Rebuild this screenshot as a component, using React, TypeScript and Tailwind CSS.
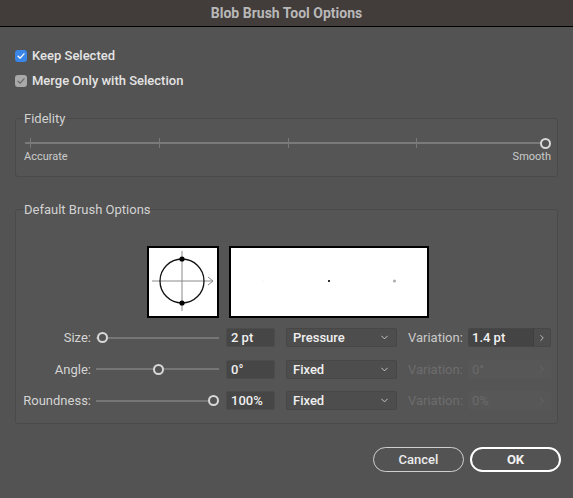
import React from "react";
import { ChevronDown, ChevronRight } from "lucide-react";

const font = { fontFamily: "Roboto, 'Noto Sans', sans-serif" };

const Check = ({ color }: { color: string }) => (
  <svg viewBox="0 0 12 12" className="w-[10px] h-[10px]">
    <path d="M2.5 6.2 L5 8.6 L9.6 3.4" fill="none" stroke={color} strokeWidth="1.6" strokeLinecap="round" strokeLinejoin="round" />
  </svg>
);

const CheckRow = ({ label, active }: { label: string; active?: boolean }) => (
  <div className="h-[25px] flex items-center gap-[5px]">
    <div
      className={
        active
          ? "w-[12px] h-[12px] rounded-[3px] bg-[#3a86e8] flex items-center justify-center"
          : "w-[12px] h-[12px] rounded-[3px] bg-[#a9a9a9] flex items-center justify-center"
      }
    >
      <Check color={active ? "#ffffff" : "#6a6a6a"} />
    </div>
    <span className="text-[13px] text-[#e4e4e4] font-medium">{label}</span>
  </div>
);

const Group = ({ title, children, className }: { title: string; children: React.ReactNode; className?: string }) => (
  <div className={"border border-[#4a4a4a] rounded-[3px] bg-[#555555] " + (className ?? "")}>
    <div className="-mt-[7px] pl-[8px] h-[14px] leading-[14px] text-[13px] text-[#d2d2d2]">{title}</div>
    {children}
  </div>
);

const Knob = () => (
  <div className="w-[11px] h-[11px] rounded-full border-2 border-[#d8d8d8] bg-[#535353] shrink-0" />
);

const FidelitySlider = () => (
  <div className="relative w-[526px] h-[12px] ml-[9px]">
    <div className="absolute left-0 right-[10px] top-[5px] h-[2px] bg-[#7a7a7a]" />
    <div className="absolute left-[5px] right-[5px] top-[1px] flex justify-between">
      <div className="w-[1px] h-[10px] bg-[#7a7a7a]" />
      <div className="w-[1px] h-[10px] bg-[#7a7a7a]" />
      <div className="w-[1px] h-[10px] bg-[#7a7a7a]" />
      <div className="w-[1px] h-[10px] bg-[#7a7a7a]" />
      <div className="w-[1px] h-[10px] bg-transparent" />
    </div>
    <div className="absolute right-0 top-[0.5px]">
      <Knob />
    </div>
  </div>
);

// pos: 0..1 knob position along the row slider
const RowSlider = ({ pos }: { pos: number }) => (
  <div className="relative w-[123px] h-[12px]">
    <div className="absolute left-0 right-0 top-[5px] h-[2px] bg-[#767676]" />
    <div className="absolute top-[0.5px]" style={{ left: `${1 + pos * 111}px` }}>
      <Knob />
    </div>
  </div>
);

const TipPreview = () => (
  <div className="w-[72px] h-[72px] border-2 border-black bg-white">
    <svg width="68" height="68" viewBox="0 0 68 68">
      <line x1="33" y1="3" x2="33" y2="63" stroke="#8a8a8a" strokeWidth="1" />
      <line x1="3" y1="33" x2="64" y2="33" stroke="#8a8a8a" strokeWidth="1" />
      <path d="M59 29 L64 33 L59 37" fill="none" stroke="#8a8a8a" strokeWidth="1" />
      <circle cx="33" cy="33" r="22" fill="none" stroke="#111" strokeWidth="1.3" />
      <circle cx="33" cy="11" r="2.6" fill="#000" />
      <circle cx="33" cy="55" r="2.6" fill="#000" />
    </svg>
  </div>
);

const StrokePreview = () => (
  <div className="w-[200px] h-[72px] border-2 border-black bg-white">
    <svg width="196" height="68" viewBox="0 0 196 68">
      <rect x="31.5" y="32.5" width="1" height="1" fill="#eeeeee" />
      <rect x="97" y="32" width="2" height="2" fill="#333" />
      <circle cx="163.5" cy="33" r="1.6" fill="#b0b0b0" />
    </svg>
  </div>
);

const Field = ({ value }: { value: string }) => (
  <div className="w-[49px] h-[19px] rounded-[2px] border border-[#4c4c4c] bg-[#464646] px-[4px] flex items-center text-[13px] text-[#efefef] font-medium">
    {value}
  </div>
);

const Dropdown = ({ value }: { value: string }) => (
  <div className="w-[111px] h-[19px] rounded-[2px] border border-[#474747] bg-[#4d4d4d] pl-[6px] pr-[6px] flex items-center justify-between text-[13px] text-[#efefef] font-medium">
    <span>{value}</span>
    <ChevronDown size={11} strokeWidth={2} color="#cfcfcf" />
  </div>
);

const Variation = ({ value, disabled }: { value: string; disabled?: boolean }) => (
  <div className="flex items-center gap-[5px]">
    <span className={disabled ? "w-[55px] text-[13px] text-[#6d6d6d]" : "w-[55px] text-[13px] text-[#c9c9c9]"}>Variation:</span>
    <div
      className={
        disabled
          ? "w-[83px] h-[19px] rounded-[2px] border border-[#575757] bg-[#575757] flex"
          : "w-[83px] h-[19px] rounded-[2px] border border-[#474747] bg-[#4d4d4d] flex"
      }
    >
      <div
        className={
          disabled
            ? "w-[64px] shrink-0 h-full px-[3px] flex items-center text-[13px] text-[#6a6a6a]"
            : "w-[64px] shrink-0 h-full px-[3px] flex items-center text-[13px] text-[#f2f2f2] font-medium bg-[#444444] rounded-l-[2px]"
        }
      >
        {value}
      </div>
      <div className={disabled ? "flex-1 flex items-center justify-center" : "flex-1 flex items-center justify-center border-l border-[#3f3f3f]"}>
        <ChevronRight size={10} strokeWidth={2} color={disabled ? "#676767" : "#d0d0d0"} />
      </div>
    </div>
  </div>
);

const ParamRow = ({
  label,
  pos,
  value,
  mode,
  variation,
  disabled,
}: {
  label: string;
  pos: number;
  value: string;
  mode: string;
  variation: string;
  disabled?: boolean;
}) => (
  <div className="h-[31.5px] flex items-center">
    <span className="w-[75px] text-right text-[13px] text-[#d4d4d4]">{label}</span>
    <div className="ml-[5px]">
      <RowSlider pos={pos} />
    </div>
    <div className="ml-[7px]">
      <Field value={value} />
    </div>
    <div className="ml-[11px]">
      <Dropdown value={mode} />
    </div>
    <div className="ml-[11px]">
      <Variation value={variation} disabled={disabled} />
    </div>
  </div>
);

export default function App() {
  return (
    <div className="w-[573px] h-[498px] bg-[#535353] flex flex-col overflow-hidden" style={font}>
      <div className="h-[27px] shrink-0 bg-[#423c3b] border-b border-black flex items-center justify-center">
        <span className="text-[14px] font-bold text-[#b8b8b8]">Blob Brush Tool Options</span>
      </div>

      <div className="px-[15px] pt-[16px] flex flex-col">
        <CheckRow label="Keep Selected" active />
        <CheckRow label="Merge Only with Selection" />

        <Group title="Fidelity" className="mt-[25px] h-[59px]">
          <div className="mt-[11px]">
            <FidelitySlider />
          </div>
          <div className="flex justify-between pl-[8px] pr-[6px] text-[11px] text-[#cbcbcb]">
            <span>Accurate</span>
            <span>Smooth</span>
          </div>
        </Group>

        <Group title="Default Brush Options" className="mt-[32px] h-[215px]">
          <div className="flex gap-[10px] ml-[131px] mt-[29px]">
            <TipPreview />
            <StrokePreview />
          </div>
          <div className="mt-[4px] flex flex-col">
            <ParamRow label="Size:" pos={0} value="2 pt" mode="Pressure" variation="1.4 pt" />
            <ParamRow label="Angle:" pos={0.5} value="0°" mode="Fixed" variation="0°" disabled />
            <ParamRow label="Roundness:" pos={1} value="100%" mode="Fixed" variation="0%" disabled />
          </div>
        </Group>

        <div className="flex justify-end gap-[6px] mt-[23px] -mr-[3px]">
          <button className="w-[91px] h-[25px] rounded-full border border-[#cfcfcf] text-[13px] font-medium text-[#ececec]">
            Cancel
          </button>
          <button className="w-[91px] h-[25px] rounded-full border-2 border-white text-[13px] font-bold text-[#f2f2f2]">
            OK
          </button>
        </div>
      </div>
    </div>
  );
}
